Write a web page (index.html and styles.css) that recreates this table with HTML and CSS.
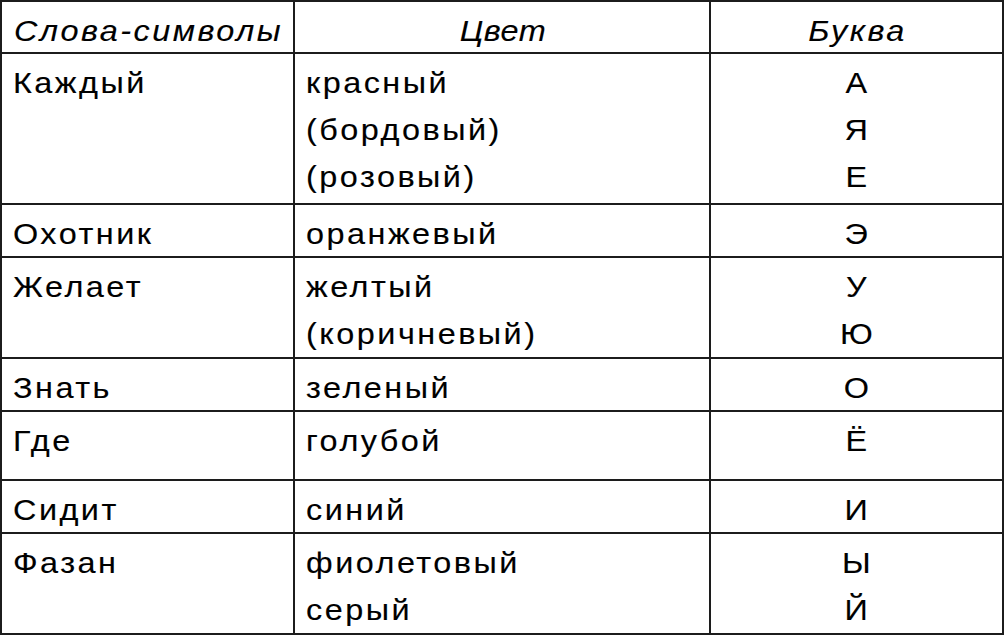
FILE: index.html
```html
<!DOCTYPE html>
<html lang="ru">
<head>
<meta charset="utf-8">
<title>Слова-символы</title>
<link rel="stylesheet" href="styles.css">
</head>
<body>
<div class="table">
  <div class="cell head"><div class="ln">Слова-символы</div></div>
  <div class="cell head"><div class="ln tight">Цвет</div></div>
  <div class="cell head"><div class="ln">Буква</div></div>

  <div class="cell"><div class="ln">Каждый</div></div>
  <div class="cell"><div class="ln">красный</div><div class="ln">(бордовый)</div><div class="ln">(розовый)</div></div>
  <div class="cell c"><div class="ln">А</div><div class="ln">Я</div><div class="ln">Е</div></div>

  <div class="cell"><div class="ln">Охотник</div></div>
  <div class="cell"><div class="ln">оранжевый</div></div>
  <div class="cell c"><div class="ln">Э</div></div>

  <div class="cell"><div class="ln">Желает</div></div>
  <div class="cell"><div class="ln">желтый</div><div class="ln">(коричневый)</div></div>
  <div class="cell c"><div class="ln">У</div><div class="ln">Ю</div></div>

  <div class="cell"><div class="ln">Знать</div></div>
  <div class="cell"><div class="ln">зеленый</div></div>
  <div class="cell c"><div class="ln">О</div></div>

  <div class="cell"><div class="ln">Где</div></div>
  <div class="cell"><div class="ln">голубой</div></div>
  <div class="cell c"><div class="ln">Ё</div></div>

  <div class="cell"><div class="ln">Сидит</div></div>
  <div class="cell"><div class="ln">синий</div></div>
  <div class="cell c"><div class="ln">И</div></div>

  <div class="cell"><div class="ln">Фазан</div></div>
  <div class="cell"><div class="ln">фиолетовый</div><div class="ln">серый</div></div>
  <div class="cell c"><div class="ln">Ы</div><div class="ln">Й</div></div>
</div>
</body>
</html>
```

FILE: styles.css
```css
* { box-sizing: border-box; }
html, body { margin: 0; padding: 0; background: #fff; }
body {
  font-family: "Liberation Sans", Arial, sans-serif;
  font-size: 30px;
  letter-spacing: 2.3px;
  color: #000;
  -webkit-text-stroke: 0.12px #000;
}
.table {
  display: grid;
  width: 1004px;
  grid-template-columns: 293px 416px 293px;
  grid-template-rows: 52px 151px 53px 101px 53px 69px 53px 101px;
  border-top: 2px solid #1c1c1c;
  border-left: 2px solid #1c1c1c;
}
.cell {
  border-right: 2px solid #1c1c1c;
  border-bottom: 2px solid #1c1c1c;
  padding: 2px 0 0 11px;
}
.ln {
  height: 47px;
  line-height: 54px;
  transform: scaleX(1.08);
  transform-origin: left center;
}
.cell.c,
.head {
  padding-left: 2px;
  text-align: center;
}
.cell.c .ln,
.head .ln {
  transform-origin: center center;
}
.head .ln {
  font-style: italic;
  height: 48px;
}
.head .tight {
  letter-spacing: 0.5px;
}
```
